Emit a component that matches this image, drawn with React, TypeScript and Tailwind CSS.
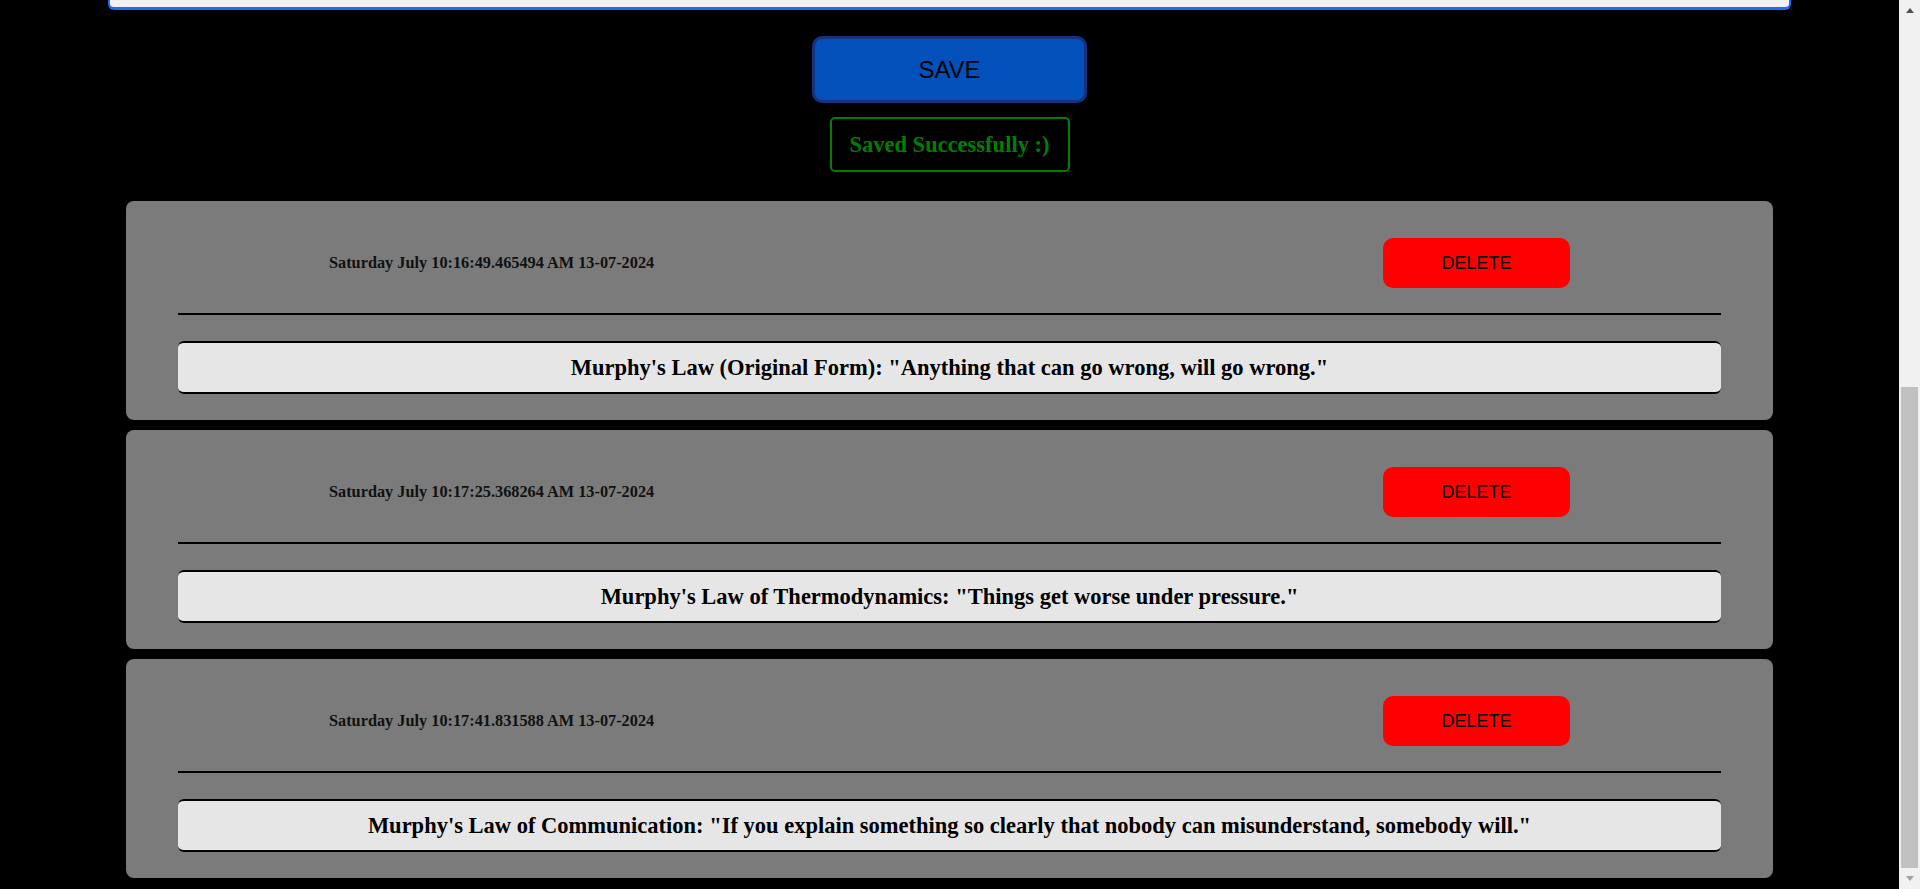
import React from "react";

const entries = [
  {
    date: "Saturday July 10:16:49.465494 AM 13-07-2024",
    text: `Murphy's Law (Original Form): "Anything that can go wrong, will go wrong."`,
  },
  {
    date: "Saturday July 10:17:25.368264 AM 13-07-2024",
    text: `Murphy's Law of Thermodynamics: "Things get worse under pressure."`,
  },
  {
    date: "Saturday July 10:17:41.831588 AM 13-07-2024",
    text: `Murphy's Law of Communication: "If you explain something so clearly that nobody can misunderstand, somebody will."`,
  },
];

const serif = { fontFamily: '"Liberation Serif", "Times New Roman", serif' };
const sans = { fontFamily: '"Liberation Sans", Arial, sans-serif' };

function Card({ date, text }: { date: string; text: string }) {
  return (
    <div className="mx-[126px] h-[219px] shrink-0 rounded-[8px] bg-[#7b7b7b] px-[52px] pt-[37px]">
      <div className="flex h-[50px] items-center justify-between px-[151px]">
        <span className="text-[16.3px] font-bold text-[#111]" style={serif}>
          {date}
        </span>
        <button
          className="h-[50px] w-[187px] rounded-[10px] bg-[#ff0000] text-[18px] text-black"
          style={sans}
        >
          DELETE
        </button>
      </div>
      <div className="mt-[25px] h-[2px] bg-black" />
      <div
        className="mt-[26px] flex h-[53px] items-center justify-center rounded-[6px] border-y-2 border-black bg-[#e6e6e6] text-[22.5px] font-bold text-black"
        style={serif}
      >
        {text}
      </div>
    </div>
  );
}

export default function App() {
  return (
    <div className="flex h-[889px] w-full overflow-hidden bg-black">
      <div className="flex flex-1 flex-col">
        <div className="mx-[108px] h-[10px] shrink-0 rounded-b-[6px] border-x-2 border-b-[3px] border-[#1a6ef5] bg-[#f0f0f0]" />
        <div className="mt-[26px] flex justify-center">
          <button
            className="h-[67px] w-[275px] rounded-[10px] border-[3px] border-[#17307f] bg-[#0251bb] text-[24px] text-black"
            style={sans}
          >
            SAVE
          </button>
        </div>
        <div className="mt-[14px] flex justify-center">
          <div
            className="flex h-[55px] w-[240px] items-center justify-center rounded-[5px] border-2 border-[#008000] text-[22.5px] font-bold text-[#008000]"
            style={serif}
          >
            Saved Successfully :)
          </div>
        </div>
        <div className="mt-[29px] flex flex-col gap-[10px]">
          {entries.map((e) => (
            <Card key={e.date} date={e.date} text={e.text} />
          ))}
        </div>
      </div>
      <div className="relative flex w-[21px] shrink-0 flex-col bg-[#f1f1f1]">
        <div className="flex h-[21px] items-center justify-center">
          <div className="h-0 w-0 border-x-[4px] border-b-[5px] border-x-transparent border-b-[#505050]" />
        </div>
        <div className="ml-[2px] mr-[2px] mt-[366px] h-[481px] bg-[#c1c1c1]" />
        <div className="mt-auto flex h-[21px] items-center justify-center">
          <div className="h-0 w-0 border-x-[4px] border-t-[5px] border-x-transparent border-t-[#a3a3a3]" />
        </div>
      </div>
    </div>
  );
}
